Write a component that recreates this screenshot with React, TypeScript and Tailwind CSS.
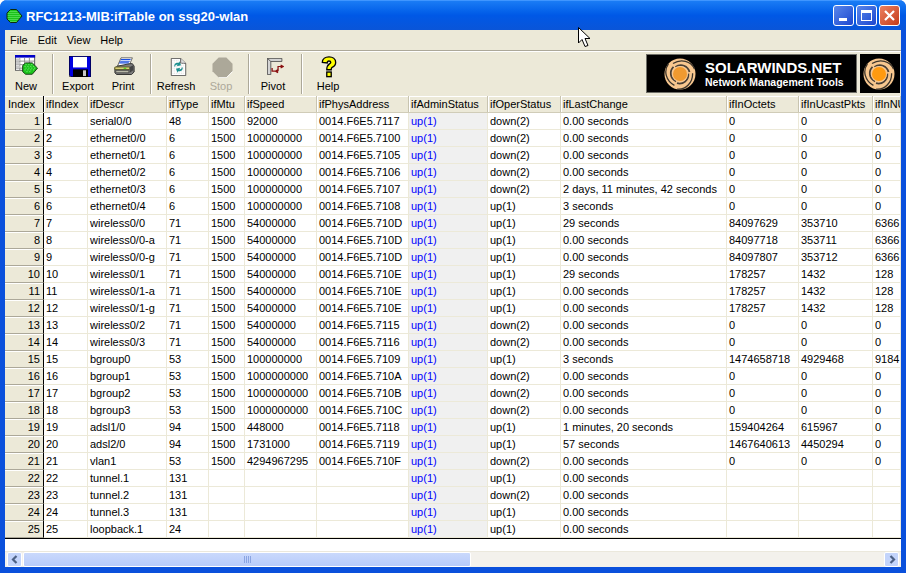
const rows: string[][] = [
  ["1","serial0/0","48","1500","92000","0014.F6E5.7117","up(1)","down(2)","0.00 seconds","0","0","0"],
  ["2","ethernet0/0","6","1500","100000000","0014.F6E5.7100","up(1)","down(2)","0.00 seconds","0","0","0"],
  ["3","ethernet0/1","6","1500","100000000","0014.F6E5.7105","up(1)","down(2)","0.00 seconds","0","0","0"],
  ["4","ethernet0/2","6","1500","100000000","0014.F6E5.7106","up(1)","down(2)","0.00 seconds","0","0","0"],
  ["5","ethernet0/3","6","1500","100000000","0014.F6E5.7107","up(1)","down(2)","2 days, 11 minutes, 42 seconds","0","0","0"],
  ["6","ethernet0/4","6","1500","100000000","0014.F6E5.7108","up(1)","up(1)","3 seconds","0","0","0"],
  ["7","wireless0/0","71","1500","54000000","0014.F6E5.710D","up(1)","up(1)","29 seconds","84097629","353710","6366"],
  ["8","wireless0/0-a","71","1500","54000000","0014.F6E5.710D","up(1)","up(1)","0.00 seconds","84097718","353711","6366"],
  ["9","wireless0/0-g","71","1500","54000000","0014.F6E5.710D","up(1)","up(1)","0.00 seconds","84097807","353712","6366"],
  ["10","wireless0/1","71","1500","54000000","0014.F6E5.710E","up(1)","up(1)","29 seconds","178257","1432","128"],
  ["11","wireless0/1-a","71","1500","54000000","0014.F6E5.710E","up(1)","up(1)","0.00 seconds","178257","1432","128"],
  ["12","wireless0/1-g","71","1500","54000000","0014.F6E5.710E","up(1)","up(1)","0.00 seconds","178257","1432","128"],
  ["13","wireless0/2","71","1500","54000000","0014.F6E5.7115","up(1)","down(2)","0.00 seconds","0","0","0"],
  ["14","wireless0/3","71","1500","54000000","0014.F6E5.7116","up(1)","down(2)","0.00 seconds","0","0","0"],
  ["15","bgroup0","53","1500","100000000","0014.F6E5.7109","up(1)","up(1)","3 seconds","1474658718","4929468","9184"],
  ["16","bgroup1","53","1500","1000000000","0014.F6E5.710A","up(1)","down(2)","0.00 seconds","0","0","0"],
  ["17","bgroup2","53","1500","1000000000","0014.F6E5.710B","up(1)","down(2)","0.00 seconds","0","0","0"],
  ["18","bgroup3","53","1500","1000000000","0014.F6E5.710C","up(1)","down(2)","0.00 seconds","0","0","0"],
  ["19","adsl1/0","94","1500","448000","0014.F6E5.7118","up(1)","up(1)","1 minutes, 20 seconds","159404264","615967","0"],
  ["20","adsl2/0","94","1500","1731000","0014.F6E5.7119","up(1)","up(1)","57 seconds","1467640613","4450294","0"],
  ["21","vlan1","53","1500","4294967295","0014.F6E5.710F","up(1)","down(2)","0.00 seconds","0","0","0"],
  ["22","tunnel.1","131","","","","up(1)","up(1)","0.00 seconds","","",""],
  ["23","tunnel.2","131","","","","up(1)","down(2)","0.00 seconds","","",""],
  ["24","tunnel.3","131","","","","up(1)","up(1)","0.00 seconds","","",""],
  ["25","loopback.1","24","","","","up(1)","up(1)","0.00 seconds","","",""],
];
const heads = ["ifIndex","ifDescr","ifType","ifMtu","ifSpeed","ifPhysAddress","ifAdminStatus","ifOperStatus","ifLastChange","ifInOctets","ifInUcastPkts","ifInNUcastPkts"];
const widths = ["w-[44px]","w-[79px]","w-[42px]","w-[36px]","w-[72px]","w-[92px]","w-[79px]","w-[73px]","w-[166px]","w-[72px]","w-[74px]","w-[28px]"];

function Swirl({ size, dot }: { size: number; dot: string }) {
  return (
    <svg width={size} height={size} viewBox="0 0 32 32" className="shrink-0">
      <circle cx="16" cy="16" r="15.500" fill="#f8c78f" />
      {[0, 120, 240].map((a) => (
        <g key={a} transform={`rotate(${a} 16 16)`}>
          <path d="M30.500 11C27 3 17 .5 9 5.500" fill="none" stroke="#3c352c" strokeWidth="1.300" />
          <path d="M25.500 14C24 8 17 5 11.500 9" fill="none" stroke="#4a4036" strokeWidth="1.800" />
        </g>
      ))}
      <circle cx="16" cy="16" r="8" fill="#f8c78f" />
      <circle cx="16" cy="16" r="7" fill={dot} />
    </svg>
  );
}

function Strawberry({ w, h }: { w: number; h: number }) {
  return (
    <svg width={w} height={h} viewBox="0 0 16 14" className="mt-[1px]">
      <defs>
        <pattern id="dots" width="2" height="2" patternUnits="userSpaceOnUse">
          <rect width="2" height="2" fill="#1bc21b" />
          <rect width="1" height="1" fill="#7df07d" />
        </pattern>
      </defs>
      <path d="M4 .5h6l5.500 6.500L10 13.500H4L.5 10V4Z" fill="url(#dots)" stroke="#0b2b0b" strokeWidth="1" />
    </svg>
  );
}

const IconNew = () => (
  <svg width="23" height="21" viewBox="0 0 24 24" preserveAspectRatio="none" className="mt-[1px] ml-[1px]">
    <rect x="0.500" y="0.500" width="20" height="17" fill="#fff" stroke="#555" />
    <rect x="0" y="0" width="21" height="3" fill="#0000c8" />
    <path d="M5 3v15M10 3v15M15 3v15M1 7h19M1 11h19M1 15h19" stroke="#8a8a8a" />
    <rect x="1" y="4" width="4" height="3" fill="#c8c8c8" /><rect x="1" y="8" width="4" height="3" fill="#c8c8c8" /><rect x="1" y="12" width="4" height="3" fill="#c8c8c8" />
    <path d="M11 9h7l5.500 6-5.500 7h-7l-3-3v-7Z" fill="#1bc21b" stroke="#123312" />
    <path d="M11 11h1M14 11h1M17 11h1M10 13h1M13 13h1M16 13h1M19 13h1M11 15h1M14 15h1M17 15h1M20 15h1M10 17h1M13 17h1M16 17h1M19 17h1M12 19h1M15 19h1" stroke="#8df58d" />
  </svg>
);
const IconExport = () => (
  <svg width="22" height="21" viewBox="0 0 22 22" preserveAspectRatio="none" className="mt-[2px] ml-[4px]">
    <path d="M0 0h22v22H2l-2-2Z" fill="#0000e0" />
    <rect x="0.500" y="0.500" width="21" height="21" fill="none" stroke="#000" opacity="0.55"/>
    <rect x="4" y="1" width="14" height="11" fill="#fff" />
    <rect x="4" y="14" width="15" height="8" fill="#000" />
    <rect x="14" y="15" width="3" height="6" fill="#c8c8c8" />
  </svg>
);
const IconPrint = () => (
  <svg width="21" height="20" viewBox="0 0 24 24" preserveAspectRatio="none" className="mt-[3px] ml-[2px]">
    <path d="M8 1h13l-4 10H4Z" fill="#fff" stroke="#555" />
    <path d="M8 3h11M7 5h11M6 7h11" stroke="#1c4fe0" strokeWidth="1.300" />
    <path d="M18 8h3l2 3v7l-3 3H3l-2-2v-6l3-2Z" fill="#7c7c7c" stroke="#222" />
    <path d="M1 12h17v3H1Z" fill="#d8cf78" stroke="#5c5a20" />
    <path d="M2 16h15v3H2Z" fill="#b8b8a8" stroke="#444" />
    <rect x="11" y="13" width="3" height="1" fill="#10d010" />
    <path d="M18 12l4-2v6l-4 3Z" fill="#444" />
  </svg>
);
const IconRefresh = () => (
  <svg width="17" height="18" viewBox="0 0 20 22" preserveAspectRatio="none" className="mt-[4px] ml-[5px]">
    <path d="M1.500 .5h11l6 6v15h-17Z" fill="#fff" stroke="#444" />
    <path d="M12.500 .5v6h6" fill="#ddd" stroke="#444" />
    <path d="M3 3h8M3 5h8M3 7h14M3 9h14M3 11h14M3 13h14M3 15h14M3 17h14M3 19h14" stroke="#dcdcdc" strokeDasharray="1 1"/>
    <path d="M5 10c0-3 2-5 5-4l1-2 2 5-5 1 1-2c-2 0-3 1-3 3Z" fill="#1a8f8f" />
    <path d="M15 12c0 3-2 5-5 4l-1 2-2-5 5-1-1 2c2 0 3-1 3-3Z" fill="#1a8f8f" />
  </svg>
);
const IconStop = () => (
  <svg width="21" height="21" viewBox="0 0 22 22" className="mt-[3px] ml-[3px]">
    <path d="M7 .5h8l6.500 6.500v8L15 21.500H7L.5 15V7Z" fill="#aca899" />
    <path d="M7 21.800h8l6.800-6.800" fill="none" stroke="#fff" />
  </svg>
);
const IconPivot = () => (
  <svg width="17" height="17" viewBox="0 0 20 22" preserveAspectRatio="none" className="mt-[4px] ml-[5px]">
    <path d="M.5.5h17v4h-13v17h-4Z" fill="#d4d4d4" stroke="#444" />
    <path d="M4.500 4.500 .5.500" stroke="#444" />
    <path d="M6 13v4h7M13 15l-3 2 3 2M13 17v-6h6M16 9l3 2-3 2" fill="none" stroke="#8a1010" strokeWidth="1.500"/>
  </svg>
);
const IconHelp = () => (
  <svg width="16" height="22" viewBox="0 0 18 24" preserveAspectRatio="none" className="mt-[2px] ml-[2px]">
    <path d="M1.500 7C1.500 3 5 1 9 1s7.500 2 7.500 6c0 3-2 4.500-4 5.500-1 .5-1 1.500-1 2.500h-5c0-3 .5-5 3-6.500 1-.5 1.500-1 1.500-1.500 0-1-1-1.500-2-1.500S7 6 7 7.500Z" fill="#ffff00" stroke="#000" strokeWidth="1.500" />
    <rect x="6.500" y="17.500" width="5" height="5" fill="#ffff00" stroke="#000" strokeWidth="1.500" />
  </svg>
);

function Tool({ label, w, children, disabled }: { label: string; w: string; children: React.ReactNode; disabled?: boolean }) {
  return (
    <div className={`${w} h-[40px] flex flex-col items-center shrink-0`}>
      <div className="h-[25px] flex items-start justify-center">{children}</div>
      <span className={disabled ? "text-[#aca899] leading-[14px]" : "leading-[14px]"}>{label}</span>
    </div>
  );
}
const Sep = () => <div className="w-[2px] h-[40px] shrink-0 border-l border-[#aca899] bg-white" />;

export default function App() {
  return (
    <div className="w-[906px] h-[573px] overflow-hidden flex flex-col rounded-t-[7px] bg-[#0a50dc] relative text-[11px] text-black font-['Liberation_Sans',sans-serif]">
      <div className="h-[30px] shrink-0 flex items-center pl-[6px] pr-[6px] bg-gradient-to-b from-[#1a7cf5] via-[#0058e6] to-[#0a55d8] border-t border-[#3f96ff]">
        <Strawberry w={17} h={14} />
        <span className="ml-[3px] mt-[2px] text-white font-bold text-[13px] leading-none">RFC1213-MIB:ifTable on ssg20-wlan</span>
        <div className="ml-auto flex gap-[2px]">
          <div className="w-[21px] h-[21px] rounded-[3px] border border-white bg-gradient-to-br from-[#5b86ea] to-[#1d45cf] flex items-end pl-[5px] pb-[4px]"><div className="w-[8px] h-[3px] bg-white" /></div>
          <div className="w-[21px] h-[21px] rounded-[3px] border border-white bg-gradient-to-br from-[#5b86ea] to-[#1d45cf] flex items-center justify-center"><div className="w-[11px] h-[11px] border border-white border-t-[3px]" /></div>
          <div className="w-[21px] h-[21px] rounded-[3px] border border-white bg-gradient-to-br from-[#ec8060] to-[#c43a14] flex items-center justify-center">
            <svg width="11" height="11" viewBox="0 0 11 11"><path d="M1 1l9 9M10 1l-9 9" stroke="#fff" strokeWidth="2.200" /></svg>
          </div>
        </div>
      </div>
      <div className="flex-1 mx-[5px] mb-[7px] flex flex-col bg-[#ece9d8] min-h-0">
        <div className="h-[20px] shrink-0 flex items-center gap-[10px] pl-[5px]">
          <span>File</span><span>Edit</span><span>View</span><span>Help</span>
        </div>
        <div className="h-[46px] shrink-0 flex items-center border-t border-[#aca899] shadow-[inset_0_1px_0_#fff] pr-[1px]">
          <Tool label="New" w="w-[42px]"><IconNew /></Tool>
          <div className="ml-[5px] mr-[2px]"><Sep /></div>
          <Tool label="Export" w="w-[44px]"><IconExport /></Tool>
          <Tool label="Print" w="w-[46px]"><IconPrint /></Tool>
          <div className="ml-[4px] mr-[2px]"><Sep /></div>
          <Tool label="Refresh" w="w-[44px]"><IconRefresh /></Tool>
          <Tool label="Stop" w="w-[46px]" disabled><IconStop /></Tool>
          <div className="ml-[4px] mr-[2px]"><Sep /></div>
          <Tool label="Pivot" w="w-[42px]"><IconPivot /></Tool>
          <div className="ml-[7px] mr-[2px]"><Sep /></div>
          <Tool label="Help" w="w-[46px]"><IconHelp /></Tool>
          <div className="ml-auto flex gap-[3px] items-center">
            <div className="w-[211px] h-[39px] bg-black border border-[#6f6f68] flex items-center pl-[17px] gap-[9px] overflow-hidden">
              <Swirl size={32} dot="#f09a30" />
              <div className="flex flex-col text-white font-bold leading-none">
                <span className="text-[15px] leading-[16px] whitespace-nowrap">SOLARWINDS.NET</span>
                <span className="text-[10.500px] leading-[12px] whitespace-nowrap">Network Management Tools</span>
              </div>
            </div>
            <div className="w-[40px] h-[39px] bg-black flex items-center pl-[3px] overflow-hidden">
              <Swirl size={32} dot="#ff9a10" />
            </div>
          </div>
        </div>
        <div className="h-[443px] shrink-0 bg-white overflow-hidden flex flex-col">
          <div className="h-[17px] flex shrink-0 border-b border-[#d0ccb8]">
            <div className="w-[39px] shrink-0 bg-[#ece9d8] border-r border-black pl-[3px] leading-[16px] shadow-[inset_0_1px_0_#fff]">Index</div>
            {heads.map((h, i) => (
              <div key={h} className={`${widths[i]} shrink-0 bg-[#ece9d8] border-r border-[#c8c4b0] shadow-[inset_1px_1px_0_#fff] pl-[2px] leading-[16px] whitespace-nowrap overflow-hidden`}>{h}</div>
            ))}
          </div>
          {rows.map((r) => (
            <div key={r[0]} className="h-[17px] flex shrink-0">
              <div className="w-[39px] shrink-0 bg-[#ece9d8] border-r border-black border-b border-b-[#aca899] shadow-[inset_0_1px_0_#fff] text-right pr-[3px] leading-[16px]">{r[0]}</div>
              {r.map((c, i) => (
                <div
                  key={i}
                  className={
                    i === 6
                      ? `${widths[i]} shrink-0 border-r border-b border-[#ece9d8] bg-[#f0f0f0] text-[#0000ff] pl-[2px] leading-[16px] whitespace-nowrap overflow-hidden`
                      : `${widths[i]} shrink-0 border-r border-b border-[#ece9d8] pl-[2px] leading-[16px] whitespace-nowrap overflow-hidden`
                  }
                >
                  {c}
                </div>
              ))}
            </div>
          ))}
          <div className="h-[1px] shrink-0 bg-black" />
        </div>
        <div className="h-[12px] shrink-0 bg-white" />
        <div className="h-[16px] shrink-0 flex items-center bg-[#f3f1ec] border-t border-[#ebe8dc] pl-[2px] pr-[2px]">
          <div className="w-[15px] h-[15px] rounded-[2px] bg-[#c3d4fb] border border-white flex items-center justify-center shrink-0">
            <svg width="8" height="9" viewBox="0 0 8 9"><path d="M5.500 1 2 4.500 5.500 8" fill="none" stroke="#4d6185" strokeWidth="2.200" /></svg>
          </div>
          <div className="ml-[1px] w-[448px] h-[15px] rounded-[2px] bg-gradient-to-b from-[#cad9fc] to-[#b7cbfa] border border-white flex items-center justify-center gap-[1px]">
            {[0,1,2,3].map((k) => <div key={k} className="w-[1px] h-[7px] bg-[#8aa4e2]" />)}
          </div>
          <div className="ml-auto w-[15px] h-[15px] rounded-[2px] bg-[#c3d4fb] border border-white flex items-center justify-center shrink-0">
            <svg width="8" height="9" viewBox="0 0 8 9"><path d="M2.500 1 6 4.500 2.500 8" fill="none" stroke="#4d6185" strokeWidth="2.200" /></svg>
          </div>
        </div>
      </div>
      <svg width="13" height="21" viewBox="0 0 13 21" className="absolute left-[578px] top-[27px]">
        <path d="M.5.500V16L4 12.500 7 19.500 10 18.500 7 11.500H12Z" fill="#fff" stroke="#000" />
      </svg>
    </div>
  );
}
